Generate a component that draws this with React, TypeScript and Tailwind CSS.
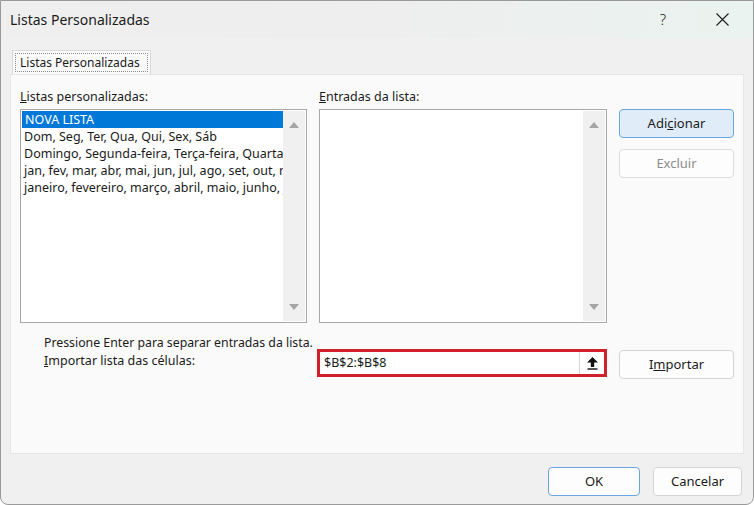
import React from "react";

const font = { fontFamily: '"Noto Sans", "Open Sans", sans-serif' };

const listItems = [
  "Dom, Seg, Ter, Qua, Qui, Sex, Sáb",
  "Domingo, Segunda-feira, Terça-feira, Quarta-feira, Quinta-feira, Sexta-feira, Sábado",
  "jan, fev, mar, abr, mai, jun, jul, ago, set, out, nov, dez",
  "janeiro, fevereiro, março, abril, maio, junho, julho, agosto, setembro, outubro, novembro, dezembro",
];

const ScrollTrack = () => (
  <div className="w-[22px] h-full bg-[#f0f0f0] flex flex-col items-center justify-between py-[11px]">
    <svg width="10" height="6" viewBox="0 0 10 6">
      <polygon points="5,0 10,6 0,6" fill="#a6a6a6" />
    </svg>
    <svg width="10" height="6" viewBox="0 0 10 6">
      <polygon points="0,0 10,0 5,6" fill="#a6a6a6" />
    </svg>
  </div>
);

const Btn = ({
  children,
  variant = "normal",
  className = "",
}: {
  children: React.ReactNode;
  variant?: "normal" | "primary" | "default" | "disabled";
  className?: string;
}) => {
  const styles = {
    normal: "bg-[#fdfdfd] border-[#d4d4d4] text-[#1b1b1b]",
    primary: "bg-[#e0edf9] border-[#6aa7e0] text-[#1b1b1b]",
    default: "bg-[#fdfdfd] border-[#6aa7e0] text-[#1b1b1b]",
    disabled: "bg-[#fdfdfd] border-[#dcdcdc] text-[#8c8c8c]",
  }[variant];
  return (
    <div
      className={`h-[29px] rounded-[4px] border flex items-center justify-center text-[13px] ${styles} ${className}`}
    >
      {children}
    </div>
  );
};

export default function App() {
  return (
    <div className="w-[754px] h-[505px] bg-white" style={font}>
      <div className="w-full h-full flex flex-col bg-[#f0f0f0] border border-[#9a9a9a] rounded-b-[8px] overflow-hidden text-[#1b1b1b]">
        {/* title bar */}
        <div className="h-[37px] flex items-center bg-gradient-to-r from-[#efefef] via-[#eeeeee] to-[#eaf3ef]">
          <span className="ml-[9px] text-[14px]">Listas Personalizadas</span>
          <span className="ml-auto mr-[50px] text-[15px] font-light">?</span>
          <svg width="13" height="13" viewBox="0 0 13 13" className="mr-[24px]">
            <path d="M0.5 0.5 L12.5 12.5 M12.5 0.5 L0.5 12.5" stroke="#1b1b1b" strokeWidth="1.1" />
          </svg>
        </div>

        {/* tabs */}
        <div className="pl-[11px] pt-[12px] flex">
          <div className="h-[24px] w-[139px] bg-[#fafafa] border border-b-0 border-[#d9d9d9] p-[2px]">
            <div className="h-full border border-dotted border-[#8a8a8a] flex items-center px-[4px] text-[12px] whitespace-nowrap overflow-hidden">
              Listas Personalizadas
            </div>
          </div>
        </div>

        {/* panel */}
        <div className="mx-[9px] h-[380px] bg-[#fafafa] border border-[#e6e6e6] pt-[14px] pl-[9px] flex flex-col">
          <div className="flex gap-[12px]">
            {/* left list */}
            <div className="w-[287px] flex flex-col">
              <div className="h-[20px] text-[12.5px] leading-[16px]">
                <u>L</u>istas personalizadas:
              </div>
              <div className="h-[214px] bg-white border border-[#a8a8a8] flex p-[1px]">
                <div className="flex-1 min-w-0 flex flex-col text-[12.5px]">
                  <div className="h-[17px] bg-[#0078d7] text-white pl-[3px] leading-[17px] whitespace-nowrap">
                    NOVA LISTA
                  </div>
                  {listItems.map((t) => (
                    <div
                      key={t}
                      className="h-[17px] pl-[2px] leading-[17px] whitespace-nowrap overflow-hidden"
                    >
                      {t}
                    </div>
                  ))}
                </div>
                <ScrollTrack />
              </div>
            </div>

            {/* right list */}
            <div className="w-[288px] flex flex-col">
              <div className="h-[20px] text-[12.5px] leading-[16px]">
                <u>E</u>ntradas da lista:
              </div>
              <div className="h-[214px] bg-white border border-[#a8a8a8] flex justify-end p-[1px]">
                <ScrollTrack />
              </div>
            </div>

            {/* buttons */}
            <div className="w-[115px] flex flex-col gap-[11px] pt-[20px]">
              <Btn variant="primary">
                Adi<u>c</u>ionar
              </Btn>
              <Btn variant="disabled">Excluir</Btn>
            </div>
          </div>

          <div className="pl-[24px] mt-[11px] text-[12.3px] leading-[17px]">
            Pressione Enter para separar entradas da lista.
          </div>

          <div className="flex mt-[-2px]">
            <div className="w-[297px] pl-[24px] pt-[3px] text-[12.5px] leading-[17px]">
              <u>I</u>mportar lista das células:
            </div>
            <div className="w-[290px] h-[28px] border-[3px] border-[#d11f2b] bg-white flex items-center">
              <span className="flex-1 pl-[4px] text-[12.5px]">$B$2:$B$8</span>
              <div className="w-px h-full bg-[#d6d6d6]" />
              <div className="w-[24px] flex justify-center">
                <svg width="11" height="13" viewBox="0 0 11 13">
                  <polygon points="5.5,0 11,5.5 7.2,5.5 7.2,10 3.8,10 3.8,5.5 0,5.5" fill="#111" />
                  <rect x="0.5" y="11.3" width="10" height="1.4" fill="#111" />
                </svg>
              </div>
            </div>
            <Btn className="w-[115px] ml-[12px] mt-[1px]">
              I<u>m</u>portar
            </Btn>
          </div>
        </div>

        {/* footer */}
        <div className="flex justify-end gap-[13px] pt-[13px] pr-[11px]">
          <Btn variant="default" className="w-[92px]">
            OK
          </Btn>
          <Btn className="w-[89px]">Cancelar</Btn>
        </div>
      </div>
    </div>
  );
}
